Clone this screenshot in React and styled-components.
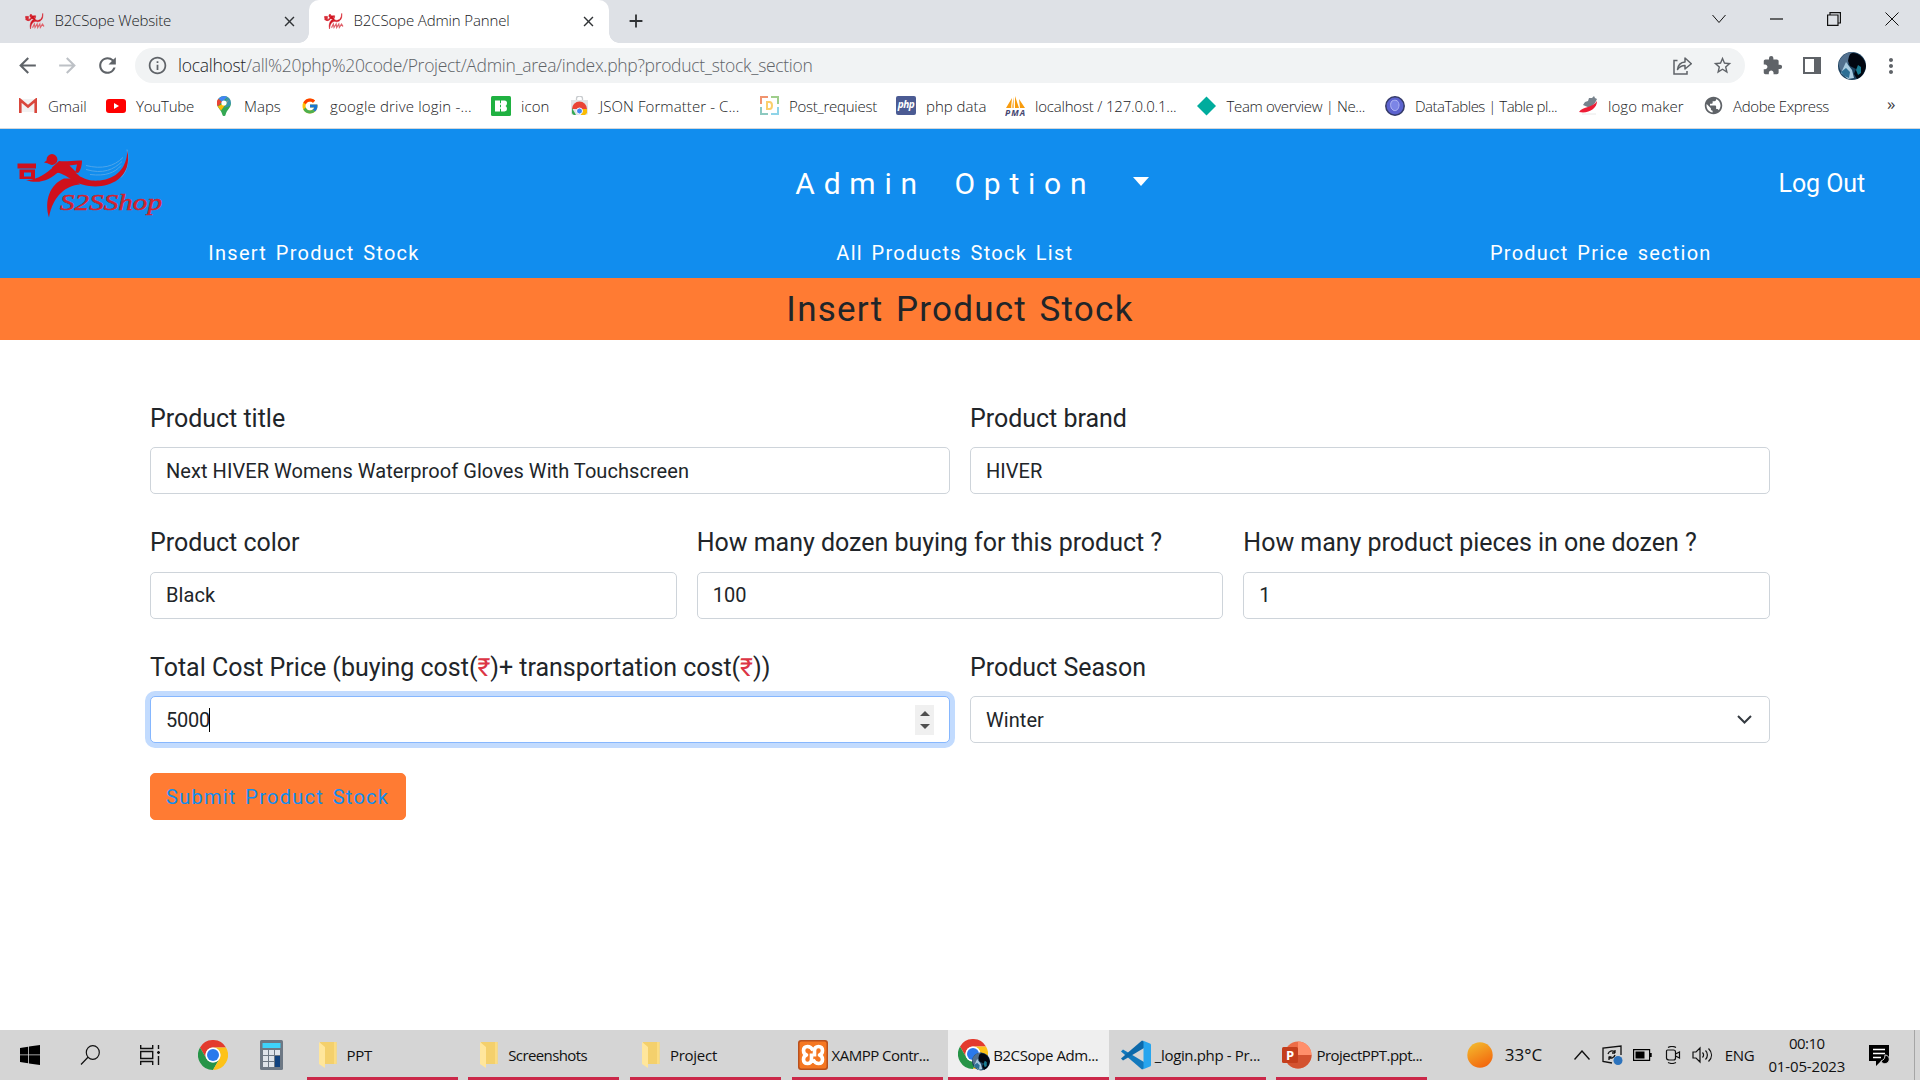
import React from 'react';
import styled, { createGlobalStyle, css } from 'styled-components';
import { MdArrowBack, MdArrowForward, MdRefresh, MdInfoOutline, MdStarOutline, MdExtension, MdMoreVert, MdPublic, MdClose, MdAdd } from 'react-icons/md';
import { FcGoogle } from 'react-icons/fc';

const BLUE = '#118dee';
const ORANGE = '#ff7b33';

const GlobalStyle = createGlobalStyle`
  *, *::before, *::after { box-sizing: border-box; }
  body { margin: 0; background: #fff; overflow: hidden; }
`;

const Screen = styled.div`
  display: flex;
  flex-direction: column;
  width: 1920px;
  height: 1080px;
  overflow: hidden;
  font-family: 'Open Sans', 'Noto Sans', sans-serif;
  svg { display: block; flex: none; }
`;

/* ---------- Browser window ---------- */

const TabStrip = styled.div`
  display: flex;
  height: 43px;
  background: #dee1e6;
`;

const Tab = styled.div`
  position: relative;
  display: flex;
  align-items: center;
  width: ${(p) => (p.$active ? 300 : 309)}px;
  height: 43px;
  padding: 0 ${(p) => (p.$active ? 12 : 11)}px 1px ${(p) => (p.$active ? 15 : 25)}px;
  color: #3c4043;
  ${(p) => p.$active && css`
    background: #fff;
    border-radius: 10px 10px 0 0;
    &::before, &::after {
      content: '';
      position: absolute;
      bottom: 0;
      width: 10px;
      height: 10px;
    }
    &::before { left: -10px; background: radial-gradient(circle at 0 0, transparent 9.5px, #fff 10px); }
    &::after { right: -10px; background: radial-gradient(circle at 100% 0, transparent 9.5px, #fff 10px); }
  `}
`;

const UiText = styled.span`
  white-space: nowrap;
  font-size: ${(p) => p.$size || 15}px;
  font-weight: ${(p) => p.$weight || 300};
  letter-spacing: ${(p) => p.$ls || 0}px;
  color: ${(p) => p.$color || '#202124'};
  line-height: 20px;
  ${(p) => p.$w && css`width: ${p.$w}px; flex: none;`}
`;

const TabTitle = styled(UiText)`
  flex: 1;
  margin-left: 9.5px;
  padding-bottom: 2px;
`;

const NewTab = styled.div`
  display: flex;
  align-items: center;
  padding: 0 0 1px 16px;
  color: #303336;
`;

const WindowControls = styled.div`
  display: flex;
  align-items: center;
  gap: 44px;
  height: 37px;
  margin-left: auto;
  padding-right: 21px;
`;

const Toolbar = styled.div`
  display: flex;
  align-items: center;
  height: 42px;
  padding: 3px 0 0 15px;
  color: #5f6368;
`;

const NavButtons = styled.div`
  display: flex;
  flex: none;
  align-items: center;
  gap: 15px;
  width: 120px;
`;

const AddressBar = styled.div`
  display: flex;
  flex: none;
  align-items: center;
  width: 1610px;
  height: 35px;
  padding: 0 12px 0 12px;
  border-radius: 18px;
  background: #f1f3f4;
`;

const Address = styled.div`
  display: flex;
  flex: 1;
  margin-left: 10px;
  padding-bottom: 2px;
`;

const AddressActions = styled.div`
  display: flex;
  align-items: center;
  gap: 20px;
`;

const ToolbarActions = styled.div`
  display: flex;
  flex: none;
  align-items: center;
  gap: 20px;
  padding-left: 17px;
`;

const ProfileActions = styled.div`
  display: flex;
  align-items: center;
  gap: 13px;
  margin-left: -3px;
`;

const BookmarkBar = styled.div`
  display: flex;
  align-items: center;
  gap: 20px;
  height: 43px;
  padding: 0 0 2px 18px;
`;

const Bookmark = styled.div`
  display: flex;
  align-items: center;
  gap: 10px;
`;

const IconSlot = styled.span`
  display: flex;
  align-items: center;
  justify-content: center;
  width: 20px;
  height: 24px;
`;

const Overflow = styled.span`
  margin-left: 36px;
  padding-bottom: 3px;
  font-size: 17px;
  line-height: 20px;
  color: #3c4043;
`;

/* ---------- Admin page ---------- */

const Page = styled.main`
  flex: 1;
  border-top: 1px solid #d3d6da;
  background: #fff;
  font-family: Roboto, sans-serif;
  color: #212529;
`;

const Header = styled.header`
  height: 149px;
  background: ${BLUE};
  color: #fff;
`;

const HeaderTop = styled.div`
  display: grid;
  grid-template-columns: 180px 1fr auto;
  align-items: center;
  height: 109px;
  padding-right: 55px;
`;

const AdminMenu = styled.div`
  display: flex;
  align-items: center;
  justify-content: center;
  padding-right: 14px;
  font-size: 30px;
  letter-spacing: 8.75px;
  word-spacing: 12.5px;
  white-space: nowrap;
`;

const Caret = styled.span`
  margin: 0 0 4px 38px;
  border: 8.5px solid transparent;
  border-top: 9px solid #fff;
  border-bottom: 0;
`;

const LogOut = styled.span`
  font-size: 25px;
  letter-spacing: -0.1px;
`;

const SpacedText = css`
  letter-spacing: 1.25px;
  word-spacing: 2.5px;
`;

const HeaderNav = styled.nav`
  display: flex;
  justify-content: space-around;
  font-size: 20px;
  line-height: 30px;
  ${SpacedText}
`;

const PageTitle = styled.h1`
  margin: 0;
  height: 62px;
  background: ${ORANGE};
  font-size: 35px;
  font-weight: 400;
  line-height: 64px;
  text-align: center;
  ${SpacedText}
`;

const Form = styled.div`
  display: flex;
  flex-direction: column;
  gap: 30px;
  padding: 59.5px 150px 0;
`;

const FieldRow = styled.div`
  display: grid;
  grid-template-columns: repeat(${(p) => p.$cols}, 1fr);
  gap: 20px;
`;

const Field = styled.div`
  display: flex;
  flex-direction: column;
  gap: 9px;
`;

const Label = styled.div`
  font-size: 25px;
  line-height: 38.5px;
  letter-spacing: -0.02px;
  white-space: nowrap;
`;

const Rupee = styled.span`
  color: #dc3545;
`;

const Control = styled.div`
  display: flex;
  align-items: center;
  height: 47px;
  padding: 0 15px;
  border: 1px solid #ced4da;
  border-radius: 5px;
  background: #fff;
  font-size: 20px;
  letter-spacing: ${(p) => (p.$focused ? -0.2 : 0.06)}px;
  line-height: 30px;
  ${(p) => p.$focused && css`
    border-color: #86b7fe;
    box-shadow: 0 0 0 5px #c2dbfe;
  `}
`;

const TextCursor = styled.span`
  width: 1px;
  height: 24px;
  margin-left: -1px;
  background: #000;
`;

const Spinner = styled.span`
  display: flex;
  flex-direction: column;
  align-items: center;
  justify-content: space-between;
  width: 19px;
  height: 30px;
  margin-left: auto;
  padding: 6px 0;
  background: #f0f0f0;
`;

const SpinArrow = styled.span`
  border: 5px solid transparent;
  ${(p) => (p.$up ? 'border-bottom-color: #505050; border-top: 0;' : 'border-top-color: #505050; border-bottom: 0;')}
`;

const SelectArrow = styled.span`
  margin-left: auto;
  padding-right: 2.5px;
`;

const Submit = styled.button`
  align-self: flex-start;
  width: 256px;
  height: 47px;
  padding: 0 15px;
  border: 1px solid ${ORANGE};
  border-radius: 5px;
  background: ${ORANGE};
  color: ${BLUE};
  font: 400 20px Roboto, sans-serif;
  text-align: left;
  white-space: nowrap;
  ${SpacedText}
`;

/* ---------- Taskbar ---------- */

const Taskbar = styled.div`
  display: flex;
  height: 50px;
  background: #d5d5d5;
`;

const Launchers = styled.div`
  display: grid;
  grid-template-columns: 60px 60px 60px 66px 51px;
  align-items: center;
  justify-items: center;
`;

const Windows = styled.div`
  display: flex;
  gap: 0.65px;
  margin-left: 4.6px;
`;

const WindowButton = styled.div`
  display: flex;
  align-items: center;
  gap: 4px;
  width: 161px;
  padding-left: 11px;
  background:
    linear-gradient(#cb2849, #cb2849) 50% 100% / ${(p) => (p.$active ? 161 : 151)}px 3px no-repeat
    ${(p) => (p.$active ? '#efefef' : 'transparent')};
`;

const WindowIcon = styled.span`
  display: flex;
  align-items: center;
  justify-content: center;
  width: 30px;
`;

const Tray = styled.div`
  display: flex;
  align-items: center;
  margin-left: 34.4px;
`;

const TrayItem = styled.span`
  display: flex;
  margin-left: ${(p) => p.$gap || 0}px;
`;

const Clock = styled.div`
  display: flex;
  flex-direction: column;
  align-items: center;
  gap: 3px;
  width: 80px;
  margin-left: 12px;
  padding-bottom: 2px;
`;

const ShowDesktop = styled.span`
  width: 6px;
  height: 50px;
  margin-left: 24px;
  border-left: 1px solid #a5a5a5;
`;

/* ---------- Icons ---------- */

const Runner = () => (
  <g fill="#cf101c">
    <path d="M17.500 163H36v5H17.500z" />
    <path d="M19.500 169h15.500v9.500h-15.500z M24 172v4h7v-4z" fillRule="evenodd" />
    <circle cx="52" cy="159" r="5.400" />
    <path d="M44 162l5-4 4 6z" />
    <path d="M26 179.500C37 180 46 173 54 166L60 170C50 180 38 184 26 179.500z" />
    <path fillRule="evenodd" d="M52 167L59 160.500C67 161.500 74 159.500 82 160C82 166 80 171 78 172.500L75.500 172L80 176C88 180 92 180.500 100 180C116 178 127 168 127.300 150C130 163 126 173 118 179C105 189 84 187 73 180C66 175 60 172 56 172z M69.500 165L77 164L75.500 171z" />
    <path d="M49 217C44 200 50 184 64 178L73 178L80 184C66 185 53 195 49 217z" />
  </g>
);

const Logo = () => (
  <svg width="180" height="100" viewBox="0 133.500 180 100">
    <g fill="none" stroke="#4ea5ea" strokeWidth="1">
      <path d="M86 165C102 169 114 166 123 157M86 169C103 174 114 169 122 161M90 174C106 176 115 172 121 165" />
      <path d="M127 149c2.500 12 0 22-6 28" />
    </g>
    <Runner />
    <text x="60" y="209.500" fill="#d2232f" stroke="#d2232f" strokeWidth=".5" fontFamily="'Liberation Serif', serif" fontStyle="italic" fontSize="24" textLength="102" lengthAdjust="spacingAndGlyphs">S2SShop</text>
  </svg>
);

const Favicon = () => (
  <svg width="20" height="17" viewBox="14 148 128 74" preserveAspectRatio="none">
    <g stroke="#d7202c" strokeWidth="3"><Runner /></g>
    <path d="M62 212l12-16 4 15 14-15 3 15 14-15 3 15 14-14 10 10" fill="none" stroke="#e0636c" strokeWidth="7" />
  </svg>
);

const Gmail = () => (
  <svg width="20" height="15" viewBox="0 0 20 15">
    <path d="M1.500 1h17v13h-17z" fill="#f2f2f2" />
    <path d="M2.300 15V2L10 8.500 17.700 2v13" fill="none" stroke="#d9473c" strokeWidth="2.600" />
  </svg>
);

const YouTube = () => (
  <svg width="20" height="14" viewBox="0 0 20 14"><rect width="20" height="14" rx="3" fill="#f00" /><path d="M8 4l5 3-5 3z" fill="#fff" /></svg>
);

const MapsPin = () => (
  <svg width="14" height="20" viewBox="0 0 14 20">
    <path d="M7 0a7 7 0 0 0-7 7c0 5 4 6 5.500 12 .3 1.300 2.700 1.300 3 0C10 13 14 12 14 7a7 7 0 0 0-7-7z" fill="#34a853" />
    <path d="M7 0a7 7 0 0 0-5.600 2.800L5 6l5.500-5A7 7 0 0 0 7 0z" fill="#4285f4" />
    <path d="M1.400 2.800A7 7 0 0 0 .8 10.500L5 6z" fill="#ea4335" />
    <path d="M.8 10.500C1.500 12 3 13 4 14.500L12 4 9.500 5.500z" fill="#fbbc04" />
    <path d="M10.500 1L8 5l2 3-3 4 6-2 1-3a7 7 0 0 0-3.500-6z" fill="#4285f4" opacity=".55" />
    <circle cx="7" cy="7" r="2.600" fill="#fff" />
  </svg>
);

const Icons8 = () => (
  <svg width="20" height="20" viewBox="0 0 20 20"><rect width="20" height="20" rx="1.500" fill="#1fb141" /><path d="M4 4.500h5V15.500H4zM10 4.500h3.500q2.500 0 2.500 2.500t-1.500 3q1.500.7 1.500 3t-2.500 2.500H10z" fill="#fff" /><path d="M9 8h2M9 12h2" stroke="#fff" strokeWidth="1.500" /></svg>
);

const WebStore = () => (
  <svg width="17" height="19" viewBox="0 0 17 19">
    <path d="M5.500 4V2.500a3 2.500 0 0 1 6 0V4" fill="none" stroke="#c9cccf" strokeWidth="1.300" />
    <path d="M0 4h17v13a2 2 0 0 1-2 2H2a2 2 0 0 1-2-2z" fill="#e2e4e6" />
    <path d="M1 13a7.500 7.500 0 0 1 15 0z" fill="#ea4335" />
    <path d="M1 12l4 7H3a3 3 0 0 1-2-2z" fill="#34a853" />
    <path d="M10 13h6v4l-2 2h-4z" fill="#fbbc04" />
    <circle cx="8.500" cy="15" r="3" fill="#4285f4" stroke="#fff" />
  </svg>
);

const Brackets = () => (
  <svg width="19" height="19" viewBox="0 0 19 19" fill="none" strokeWidth="2">
    <path d="M1 8V1h7" stroke="#f0946f" /><path d="M11 1h7v7" stroke="#9fce8b" />
    <path d="M18 11v7h-7" stroke="#8fd4e8" /><path d="M8 18H1v-7" stroke="#8cc9c0" />
    <path d="M7 6v7h2.500a2.500 3.500 0 0 0 0-7z" stroke="#fccf6b" />
  </svg>
);

const PhpTile = styled.span`
  width: 20px;
  height: 19px;
  border-radius: 2px;
  background: #4b5b93;
  color: #fff;
  font: italic 700 10px/17px 'Open Sans', sans-serif;
  letter-spacing: -0.4px;
  text-align: center;
`;

const PhpMyAdmin = () => (
  <svg width="20" height="20" viewBox="0 0 20 20">
    <path d="M7 2L1 12h5zM10 0v12h4zM14 3l1 9h5z" fill="#f89c0e" /><path d="M9 1L6.500 12H9z" fill="#f9c26c" />
    <text x="0" y="19.500" fontFamily="'Open Sans', sans-serif" fontSize="8.500" fontWeight="700" fontStyle="italic" fill="#45456f" textLength="20">PMA</text>
  </svg>
);

const Diamond = () => (
  <svg width="20" height="20" viewBox="0 0 20 20"><path d="M9.500 .5L19 10 9.500 19.500 0 10z" fill="#00ac9d" /></svg>
);

const DataTables = () => (
  <svg width="20" height="20" viewBox="0 0 20 20"><circle cx="10" cy="10" r="9.200" fill="#5c63cf" stroke="#343a67" strokeWidth="1.500" /><path d="M7 5c4-2 7 0 7 4s-3 7-6 5-3-7-1-9z" fill="#7c85e6" stroke="#b0b6f4" /></svg>
);

const LogoMaker = () => (
  <svg width="20" height="19" viewBox="0 0 20 19">
    <path d="M5 9l2-3 3-1 1-3 3 0 2-2 1 2 2 1-2 4-5 5z" fill="#77828c" />
    <path d="M1 16C5 10 15 12 19 5c0 8-9 13-18 11z" fill="#ee1c35" /><path d="M4 18h14" stroke="#e8e8e8" />
  </svg>
);

const Chrome = ({ size = 30 }) => (
  <svg width={size} height={size} viewBox="0 0 48 48">
    <path d="M3.200 12A24 24 0 0 1 44.800 12H24A12 12 0 0 0 13.600 30z" fill="#e33b2e" />
    <path d="M3.200 12L13.600 30A12 12 0 0 0 34.400 30L24 48A24 24 0 0 1 3.200 12z" fill="#269447" />
    <path d="M44.800 12H24A12 12 0 0 1 34.400 30L24 48A24 24 0 0 0 44.800 12z" fill="#fdc218" />
    <circle cx="24" cy="24" r="12" fill="#fff" /><circle cx="24" cy="24" r="9.600" fill="#2a79ec" />
  </svg>
);

const AvatarArt = () => (
  <g>
    <circle cx="14" cy="14" r="14" fill="#1d4260" />
    <path d="M3 6C8 0 12 0 15 0L10 12 4 20C0 16 0 10 3 6z" fill="#53718f" />
    <path d="M8 10l6 8 2 8-6 1-7-6z" fill="#a9cbe0" />
    <path d="M3 20l5-4 4 4-1 6-5-2z" fill="#2d6f95" />
    <path d="M14 1c8 0 13 6 14 13-1 6-4 11-9 13l-3-5 2-5-6-3-2-5c1-4 1-7 4-8z" fill="#020711" />
    <path d="M20 13l3 2v6l-3 2-2-5z" fill="#197c93" />
  </g>
);

const Avatar = () => <svg width="28" height="28" viewBox="0 0 28 28"><AvatarArt /></svg>;

const ChromeProfile = () => (
  <svg width="32" height="32" viewBox="0 0 32 32">
    <Chrome size={30} />
    <g transform="translate(14 13.500) scale(.64)"><AvatarArt /></g>
  </svg>
);

const Share = () => (
  <svg width="19" height="18" viewBox="0 0 19 18" fill="none" stroke="#5f6368" strokeWidth="1.500">
    <path d="M4.500 3.500H1V17h13v-3" /><path d="M12 5V1l6.300 5.700L12 12V8.500c-3.500 0-5.500 1.200-7.500 4C5 8.500 7.500 5.300 12 5z" strokeLinejoin="round" />
  </svg>
);

const SidePanel = () => (
  <svg width="18" height="17" viewBox="0 0 18 17"><path d="M1 1h16v15H1z" fill="none" stroke="#5f6368" strokeWidth="2" /><path d="M11 1h6v15h-6z" fill="#5f6368" /></svg>
);

const Line = ({ w, h, d, sw = 1.2, color = '#111' }) => (
  <svg width={w} height={h} viewBox={`0 0 ${w} ${h}`} fill="none" stroke={color} strokeWidth={sw}><path d={d} /></svg>
);

const WindowsLogo = () => (
  <svg width="20" height="20" viewBox="0 0 20 20"><path d="M0 2.900l8.200-1.200v7.800H0zM9 1.600L20 0v9.500H9zM0 10.300h8.200v7.900L0 17zM9 10.300h11V20L9 18.400z" /></svg>
);

const Calculator = () => (
  <svg width="23" height="30" viewBox="0 0 23 30">
    <rect width="23" height="30" rx="1.500" fill="#6d7884" /><path d="M2.500 3h18v5h-18z" fill="#3ed3fb" />
    <path d="M3 10h5v5H3zM9 10h5v5H9zM15 10h5v5h-5zM3 16h5v5H3zM9 16h5v5H9zM3 22h5v5H3zM9 22h5v5H9z" fill="#dfe4ea" />
    <path d="M15 16h5v11h-5z" fill="#10427f" />
  </svg>
);

const Folder = () => (
  <svg width="18" height="26" viewBox="0 0 18 26">
    <path d="M1 0h16.500v22H5z" fill="#f4d06c" /><path d="M15 0h2.500v22H15z" fill="#fbdc82" />
    <path d="M0 0l6 5v21l-6-4z" fill="#ffe69c" />
  </svg>
);

const Xampp = () => (
  <svg width="30" height="30" viewBox="0 0 30 30">
    <rect width="30" height="30" rx="3" fill="#b9501c" /><rect x="1.500" y="1.500" width="27" height="27" rx="2" fill="#f57722" />
    <path d="M15 10.500Q13 6.500 9.500 6.500Q5.500 6.500 5.500 10.500Q5.500 14 8.500 15Q5.500 16 5.500 19.500Q5.500 23.500 9.500 23.500Q13.500 23.500 13.500 19.500V13.500M15 19.500Q17 23.500 20.500 23.500Q24.500 23.500 24.500 19.500Q24.500 16 21.500 15Q24.500 14 24.500 10.500Q24.500 6.500 20.500 6.500Q16.500 6.500 16.500 10.500V16.500" fill="none" stroke="#fff" strokeWidth="3.600" strokeLinejoin="round" />
  </svg>
);

const VsCode = () => (
  <svg width="30" height="30" viewBox="0 0 30 30">
    <path d="M2 9.500L0 11.500 21 29.500l2-1V22z" fill="#1279bd" /><path d="M2 20.500L0 18.500 21 .5l2 1V8z" fill="#0c69aa" />
    <path d="M21 0.300L29 3.500c.6.300 1 .8 1 1.500v20c0 .7-.4 1.200-1 1.500l-8 3.200c1-.4 1.500-1 1.500-2V2.300c0-1-.5-1.600-1.500-2z" fill="#27a5ee" />
  </svg>
);

const PowerPoint = () => (
  <svg width="30" height="30" viewBox="0 0 30 30">
    <circle cx="16" cy="15" r="13.500" fill="#ed6c47" /><path d="M16 1.500A13.500 13.500 0 0 1 29.500 15H16z" fill="#ff8f6b" /><path d="M2.500 15h27a13.500 13.500 0 0 1-27 0z" fill="#d35230" />
    <rect y="7" width="16" height="16" rx="1.500" fill="#c43e1c" />
    <text x="4" y="19.500" fontFamily="'Open Sans', sans-serif" fontWeight="700" fontSize="13" fill="#fff">P</text>
  </svg>
);

const Sun = () => (
  <svg width="26" height="26" viewBox="0 0 26 26">
    <defs><linearGradient id="sun" x1=".2" y1="0" x2=".7" y2="1"><stop stopColor="#f3b92d" /><stop offset="1" stopColor="#f3650d" /></linearGradient></defs>
    <circle cx="13" cy="13" r="12.700" fill="url(#sun)" />
  </svg>
);

const SyncTile = () => (
  <svg width="21" height="20" viewBox="0 0 21 20" fill="none" stroke="#111" strokeWidth="1.300">
    <path d="M10 18L1 16.500V3L19 1v9" /><path d="M6 9c1-3 4-4 7-2V5m0 3h-3M13 10c-1 3-4 4-6 2.500V15m0-3h2.500" />
    <circle cx="16" cy="15.500" r="4.500" fill="#2c73bd" stroke="none" />
  </svg>
);

const Battery = () => (
  <svg width="19" height="12" viewBox="0 0 19 12"><path d="M.6.600h16v10.800H.6z" fill="none" stroke="#000" strokeWidth="1.200" /><path d="M2.500 2.500h9v7h-9zM17 4h1.700v4H17z" /></svg>
);

const Speaker = () => (
  <svg width="21" height="18" viewBox="0 0 21 18" fill="none" stroke="#111" strokeWidth="1.200"><path d="M1 6h3l4-4v14l-4-4H1zM10.500 6.500c1.300 1.500 1.300 3.500 0 5M13.500 4.500c2.500 2.500 2.500 6.500 0 9M16.500 2.500c4 4 4 9 0 13" /></svg>
);

const Notifications = () => (
  <svg width="21" height="21" viewBox="0 0 21 21">
    <path d="M0 0h20v16h-8l-5 5v-5H0z" /><path d="M4 4.500h12M4 8.500h12M4 12.500h8" stroke="#fff" strokeWidth="1.400" />
    <path d="M16 10c0 3-1 5-4 6 1 3 6 4 8 0 1-3-1-6-4-6z" fill="#000" stroke="#d5d5d5" />
  </svg>
);

/* ---------- Content ---------- */

const bookmarks = [
  { icon: <Gmail />, name: 'Gmail', w: 38, ls: -0.05 },
  { icon: <YouTube />, name: 'YouTube', w: 58, ls: -0.2 },
  { icon: <MapsPin />, name: 'Maps', w: 36, ls: 0 },
  { icon: <FcGoogle size={18} />, name: 'google drive login -...', w: 141, ls: 0.18 },
  { icon: <Icons8 />, name: 'icon', w: 28.5, ls: 0.1 },
  { icon: <WebStore />, name: 'JSON Formatter - C...', w: 139.5, ls: 0.08 },
  { icon: <Brackets />, name: 'Post_requiest', w: 87, ls: -0.25 },
  { icon: <PhpTile>php</PhpTile>, name: 'php data', w: 59, ls: 0 },
  { icon: <PhpMyAdmin />, name: 'localhost / 127.0.0.1...', w: 141.5, ls: -0.19 },
  { icon: <Diamond />, name: 'Team overview | Ne...', w: 138.5, ls: -0.36 },
  { icon: <DataTables />, name: 'DataTables | Table pl...', w: 143, ls: -0.5 },
  { icon: <LogoMaker />, name: 'logo maker', w: 75, ls: 0.05 },
  { icon: <MdPublic size={21} color="#5f6368" />, name: 'Adobe Express', w: 98, ls: -0.35 },
];

const openWindows = [
  { icon: <Folder />, name: 'PPT', ls: -0.3 },
  { icon: <Folder />, name: 'Screenshots', ls: -0.6 },
  { icon: <Folder />, name: 'Project', ls: -0.25 },
  { icon: <Xampp />, name: 'XAMPP Contr...', ls: -0.5 },
  { icon: <ChromeProfile />, name: 'B2CSope Adm...', ls: -0.4, active: true },
  { icon: <VsCode />, name: '_login.php - Pr...', ls: -0.35 },
  { icon: <PowerPoint />, name: 'ProjectPPT.ppt...', ls: -0.52 },
];

function Browser() {
  return (
    <>
      <TabStrip>
        <Tab>
          <Favicon />
          <TabTitle $ls={-0.19}>B2CSope Website</TabTitle>
          <MdClose size={17} color="#303336" />
        </Tab>
        <Tab $active>
          <Favicon />
          <TabTitle $ls={-0.13}>B2CSope Admin Pannel</TabTitle>
          <MdClose size={17} color="#303336" />
        </Tab>
        <NewTab><MdAdd size={22} /></NewTab>
        <WindowControls>
          <Line w={14} h={10} d="M.5 1L7 8.500 13.500 1" sw={1} />
          <Line w={13} h={2} d="M0 1h13" />
          <Line w={14} h={14} d="M.6 3h10.400v10.400H.6zM3 3V.6h10.400V11H11" />
          <Line w={14} h={14} d="M.5.5l13 13M13.500.5l-13 13" sw={1} />
        </WindowControls>
      </TabStrip>
      <Toolbar>
        <NavButtons>
          <MdArrowBack size={25} />
          <MdArrowForward size={25} color="#bdc1c6" />
          <MdRefresh size={25} />
        </NavButtons>
        <AddressBar>
          <MdInfoOutline size={21} />
          <Address>
            <UiText $size={17.5} $ls={-0.27} $w={68}>localhost</UiText>
            <UiText $size={17.5} $ls={-0.3} $color="#5f6368">/all%20php%20code/Project/Admin_area/index.php?product_stock_section</UiText>
          </Address>
          <AddressActions>
            <Share />
            <MdStarOutline size={21} />
          </AddressActions>
        </AddressBar>
        <ToolbarActions>
          <MdExtension size={21} />
          <SidePanel />
          <ProfileActions>
            <Avatar />
            <MdMoreVert size={24} />
          </ProfileActions>
        </ToolbarActions>
      </Toolbar>
      <BookmarkBar>
        {bookmarks.map((b) => (
          <Bookmark key={b.name}>
            <IconSlot>{b.icon}</IconSlot>
            <UiText $ls={b.ls} $w={b.w}>{b.name}</UiText>
          </Bookmark>
        ))}
        <Overflow>»</Overflow>
      </BookmarkBar>
    </>
  );
}

function AdminPage() {
  return (
    <Page>
      <Header>
        <HeaderTop>
          <Logo />
          <AdminMenu>Admin Option<Caret /></AdminMenu>
          <LogOut>Log Out</LogOut>
        </HeaderTop>
        <HeaderNav>
          <span>Insert Product Stock</span>
          <span>All Products Stock List</span>
          <span>Product Price section</span>
        </HeaderNav>
      </Header>
      <PageTitle>Insert Product Stock</PageTitle>
      <Form>
        <FieldRow $cols={2}>
          <Field>
            <Label>Product title</Label>
            <Control>Next HIVER Womens Waterproof Gloves With Touchscreen</Control>
          </Field>
          <Field>
            <Label>Product brand</Label>
            <Control>HIVER</Control>
          </Field>
        </FieldRow>
        <FieldRow $cols={3}>
          <Field>
            <Label>Product color</Label>
            <Control>Black</Control>
          </Field>
          <Field>
            <Label>How many dozen buying for this product ?</Label>
            <Control>100</Control>
          </Field>
          <Field>
            <Label>How many product pieces in one dozen ?</Label>
            <Control>1</Control>
          </Field>
        </FieldRow>
        <FieldRow $cols={2}>
          <Field>
            <Label>Total Cost Price (buying cost(<Rupee>₹</Rupee>)+ transportation cost(<Rupee>₹</Rupee>))</Label>
            <Control $focused>
              5000
              <TextCursor />
              <Spinner><SpinArrow $up /><SpinArrow /></Spinner>
            </Control>
          </Field>
          <Field>
            <Label>Product Season</Label>
            <Control>
              Winter
              <SelectArrow><Line w={15} h={9} d="M1 1l6.500 6.500L14 1" sw={2} color="#343a40" /></SelectArrow>
            </Control>
          </Field>
        </FieldRow>
        <Submit>Submit Product Stock</Submit>
      </Form>
    </Page>
  );
}

function SystemBar() {
  return (
    <Taskbar>
      <Launchers>
        <WindowsLogo />
        <Line w={20} h={20} d="M1 19.500L8.200 12M19.300 7.500a6.500 6.800 0 1 1-13 0a6.500 6.800 0 1 1 13 0" />
        <Line w={20} h={20} d="M.7 0v3.500h12V0M.7 6.500h12v7H.7zM.7 20v-3.500h12V20M18.500 0v4M18.500 6v3M17 7.500h3M18.500 11v9" sw={1.4} />
        <Chrome />
        <Calculator />
      </Launchers>
      <Windows>
        {openWindows.map((w) => (
          <WindowButton key={w.name} $active={w.active}>
            <WindowIcon>{w.icon}</WindowIcon>
            <UiText $weight={400} $ls={w.ls} $color="#111">{w.name}</UiText>
          </WindowButton>
        ))}
      </Windows>
      <Tray>
        <Sun />
        <TrayItem $gap={12}><UiText $size={17} $w={38} $weight={400} $color="#111">33°C</UiText></TrayItem>
        <TrayItem $gap={31}><Line w={16} h={10} d="M.5 9.500L8 1l7.500 8.500" sw={1.4} /></TrayItem>
        <TrayItem $gap={12}><SyncTile /></TrayItem>
        <TrayItem $gap={10}><Battery /></TrayItem>
        <TrayItem $gap={13}><Line w={17} h={18} d="M2.500 4h6q2 0 2 2v6q0 2-2 2h-4q-3 0-3-2V5q0-1 1-1M10.500 8l4-2v6l-4-2M3 1.500q4-2 8 0M3 16.500q4 2 8 0" /></TrayItem>
        <TrayItem $gap={10}><Speaker /></TrayItem>
        <TrayItem $gap={12}><UiText $w={30} $weight={400} $ls={-0.3} $color="#111">ENG</UiText></TrayItem>
        <Clock>
          <UiText $weight={400} $ls={-0.5} $color="#111">00:10</UiText>
          <UiText $weight={400} $ls={-0.15} $color="#111">01-05-2023</UiText>
        </Clock>
        <TrayItem $gap={22}><Notifications /></TrayItem>
        <ShowDesktop />
      </Tray>
    </Taskbar>
  );
}

export default function App() {
  return (
    <Screen>
      <GlobalStyle />
      <Browser />
      <AdminPage />
      <SystemBar />
    </Screen>
  );
}
